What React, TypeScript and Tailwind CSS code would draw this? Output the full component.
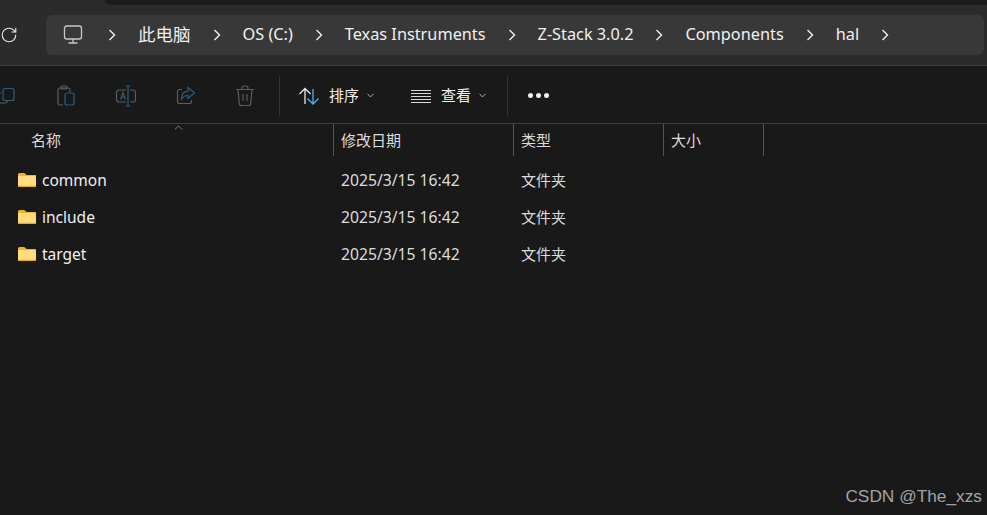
import { ChevronDown, ChevronUp, RotateCw } from 'lucide-react';

const FONT = '[font-family:"Noto_Sans","Noto_Sans_CJK_SC",sans-serif]';

const crumbs = ['OS (C:)', 'Texas Instruments', 'Z-Stack 3.0.2', 'Components', 'hal'];
const rows = ['common', 'include', 'target'];

function Chevron() {
  return (
    <svg width="8" height="12" viewBox="0 0 8 12" fill="none" stroke="#f0f0f0" strokeWidth="1.4" className="shrink-0">
      <path d="M1.500 1l5 5-5 5" />
    </svg>
  );
}

function Monitor() {
  return (
    <svg width="20" height="20" viewBox="0 0 20 20" fill="none" stroke="#c8c8c8" strokeWidth="1.300" className="mr-[3px] shrink-0">
      <rect x="1.500" y="1" width="17" height="13" rx="2.200" />
      <path d="M10 14v4M5.500 18h9" />
    </svg>
  );
}

function CopyIcon() {
  return (
    <svg width="20" height="20" viewBox="0 0 20 20" fill="none" strokeWidth="1.200">
      <path d="M4 7H2.500A1.500 1.500 0 0 0 1 8.500v7A1.500 1.500 0 0 0 2.500 17h6A1.500 1.500 0 0 0 10 15.500V15" stroke="#5c5c5c" />
      <rect x="6" y="2.500" width="11" height="12" rx="2" stroke="#2f5d7c" />
    </svg>
  );
}

function PasteIcon() {
  return (
    <svg width="20" height="22" viewBox="0 0 20 22" fill="none" strokeWidth="1.200">
      <path d="M7 20H3.500A1.500 1.500 0 0 1 2 18.500V5a2 2 0 0 1 2-2h8a2 2 0 0 1 2 2v2" stroke="#5c5c5c" />
      <rect x="5" y="1" width="6" height="3" rx="1.200" stroke="#5c5c5c" />
      <rect x="9" y="8" width="9" height="12" rx="2" stroke="#2f5d7c" />
    </svg>
  );
}

function RenameIcon() {
  return (
    <svg width="22" height="22" viewBox="0 0 22 22" fill="none" strokeWidth="1.200">
      <path d="M11 5H4a2.500 2.500 0 0 0-2.500 2.500v7A2.500 2.500 0 0 0 4 17h7M15 5h3a2.500 2.500 0 0 1 2.500 2.500v7A2.500 2.500 0 0 1 18 17h-3" stroke="#5c5c5c" />
      <path d="M10.500 1h5M13 1v20M10.500 21h5" stroke="#2f5d7c" />
      <path d="M5.500 14.500l2.500-7 2.500 7M6.500 12h3" stroke="#2f5d7c" />
    </svg>
  );
}

function ShareIcon() {
  return (
    <svg width="20" height="20" viewBox="0 0 20 20" fill="none" strokeWidth="1.200">
      <path d="M6 3.500H3.500a2 2 0 0 0-2 2v10a2 2 0 0 0 2 2h10a2 2 0 0 0 2-2V14" stroke="#5c5c5c" />
      <path d="M12 1.500l6.500 5.500-6.500 5.500V9.500c-3 0-5 1-6.500 3.500 0-4.500 2.500-7.500 6.500-7.800z" stroke="#2f5d7c" />
    </svg>
  );
}

function TrashIcon() {
  return (
    <svg width="20" height="22" viewBox="0 0 20 22" fill="none" stroke="#5c5c5c" strokeWidth="1.200">
      <path d="M1 4.500h18M7 4.500V3a2 2 0 0 1 2-2h2a2 2 0 0 1 2 2v1.500" />
      <path d="M3 4.500l1.300 14a2 2 0 0 0 2 2h7.400a2 2 0 0 0 2-2l1.300-14" />
      <path d="M8 9v7M12 9v7" />
    </svg>
  );
}

function SortIcon() {
  return (
    <svg width="22" height="18" viewBox="0 0 22 18" fill="none" strokeWidth="1.300">
      <path d="M1.500 7L7 1.500 12.500 7M7 1.500V17" stroke="#e8e8e8" />
      <path d="M9.500 11.500L15 17l5.500-5.500M15 17V2" stroke="#4cb4ee" />
    </svg>
  );
}

function ViewIcon() {
  return (
    <svg width="20" height="14" viewBox="0 0 20 14" fill="none" strokeWidth="1">
      <path d="M0 1.500h20M0 4.500h20M0 7.500h20M0 10.500h20M0 13.500h20" stroke="#d8d8d8" />
    </svg>
  );
}

function Folder() {
  return (
    <svg width="18" height="14" viewBox="0 0 18 14" className="mb-[2px] shrink-0">
      <path d="M0 1.500A1.500 1.500 0 0 1 1.500 0h4.300c.5 0 .9.200 1.200.500L8.500 2H18v2H0z" fill="#f5b21f" />
      <path d="M0 3h16.500A1.500 1.500 0 0 1 18 4.500v8A1.500 1.500 0 0 1 16.500 14h-15A1.500 1.500 0 0 1 0 12.500z" fill="#ffdc7c" />
      <path d="M0 12.800h18A1.500 1.500 0 0 1 16.500 14h-15A1.500 1.500 0 0 1 0 12.800z" fill="#eda91a" />
    </svg>
  );
}

function App() {
  return (
    <div className={`relative h-[515px] w-[987px] overflow-hidden bg-[#191919] ${FONT}`}>
      {/* Title strip + address bar */}
      <div className="h-[66px] border-b border-[#3f3f3f] bg-[#2b2b2b]">
        <div className="ml-[105px] h-[5px] rounded-bl-md bg-[#1c1c1c]" />
        <div className="flex h-[60px] items-center">
          <RotateCw size={18} strokeWidth={1.5} className="shrink-0 text-[#e8e8e8]" />
          <div className="mb-[1px] ml-[28px] flex h-10 w-[938px] items-center gap-[22px] rounded-md bg-[#383838] pl-[17px] text-[16.3px] text-[#f0f0f0]">
            <Monitor />
            <Chevron />
            <span className="text-[17.5px]">此电脑</span>
            {crumbs.map((c) => (
              <div key={c} className="contents">
                <Chevron />
                <span className="whitespace-nowrap">{c}</span>
              </div>
            ))}
            <Chevron />
          </div>
        </div>
      </div>

      {/* Command bar */}
      <div className="flex h-[58px] items-center border-b border-[#3f3f3f] pt-[2px] text-[15px] text-[#f0f0f0]">
        <div className="-ml-[3px] flex items-center gap-[39px]">
          <CopyIcon />
          <PasteIcon />
          <RenameIcon />
          <ShareIcon />
          <TrashIcon />
        </div>
        <div className="ml-[24px] h-10 w-px bg-[#333333]" />
        <div className="ml-[18px] flex items-center">
          <SortIcon />
          <span className="ml-[9px]">排序</span>
          <ChevronDown size={11} className="ml-[6px] text-[#c0c0c0]" />
        </div>
        <div className="ml-[35px] flex items-center">
          <ViewIcon />
          <span className="ml-[10px]">查看</span>
          <ChevronDown size={11} className="ml-[6px] text-[#c0c0c0]" />
        </div>
        <div className="ml-[19px] h-10 w-px bg-[#333333]" />
        <div className="ml-[20px] flex items-center gap-[3px]">
          <span className="h-[5px] w-[5px] rounded-full bg-[#f0f0f0]" />
          <span className="h-[5px] w-[5px] rounded-full bg-[#f0f0f0]" />
          <span className="h-[5px] w-[5px] rounded-full bg-[#f0f0f0]" />
        </div>
      </div>

      {/* Column headers */}
      <div className="relative grid h-[32px] grid-cols-[334px_180px_150px_100px] text-[15px] text-[#dcdcdc]">
        <ChevronUp size={13} strokeWidth={1.2} className="absolute left-[172px] -top-[3px] text-[#b0b0b0]" />
        <div className="flex items-center border-r border-[#555555] pl-[31px]">名称</div>
        <div className="flex items-center border-r border-[#555555] pl-[7px]">修改日期</div>
        <div className="flex items-center border-r border-[#555555] pl-[7px]">类型</div>
        <div className="flex items-center border-r border-[#555555] pl-[7px]">大小</div>
      </div>

      {/* File rows */}
      <div className="pt-[6px] text-[15.5px] text-[#f0f0f0]">
        {rows.map((name) => (
          <div key={name} className="grid h-[37px] grid-cols-[334px_180px_150px_100px] items-center">
            <div className="flex items-center gap-[6px] pl-[18px]">
              <Folder />
              <span>{name}</span>
            </div>
            <div className="pl-[7px] text-[15.7px] text-[#dcdcdc]">2025/3/15 16:42</div>
            <div className="pl-[7px] text-[15px] text-[#dcdcdc]">文件夹</div>
            <div />
          </div>
        ))}
      </div>

      <div className="absolute bottom-[5px] right-[5px] [font-family:'Liberation_Sans',sans-serif] text-[17.3px] text-[#a3a3a3]">
        CSDN @The_xzs
      </div>
    </div>
  );
}

export default App;
